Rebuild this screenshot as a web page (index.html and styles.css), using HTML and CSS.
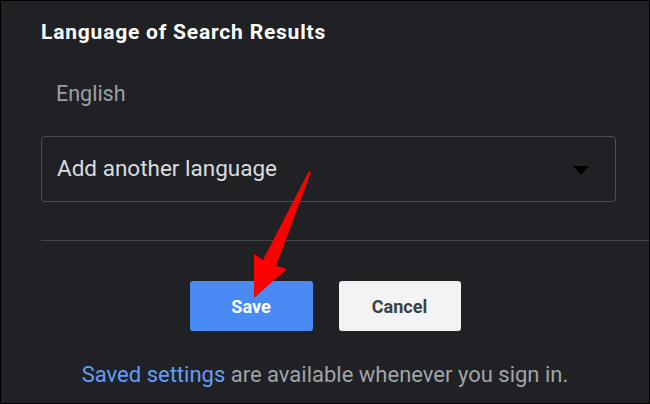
FILE: index.html
```html
<!DOCTYPE html>
<html lang="en">
<head>
<meta charset="utf-8">
<title>Language of Search Results</title>
<link rel="stylesheet" href="styles.css">
</head>
<body>
<div class="frame">
  <section class="settings">
    <h1 class="title">Language of Search Results</h1>
    <div class="current">English</div>
    <div class="select">
      <span class="select-label">Add another language</span>
      <span class="caret"></span>
    </div>
    <div class="divider"></div>
  </section>
  <div class="actions">
    <button class="btn btn-primary">Save</button>
    <button class="btn btn-secondary">Cancel</button>
  </div>
  <p class="footer"><a class="link" href="#">Saved settings</a> are available whenever you sign in.</p>
  <svg class="arrow" width="650" height="404" viewBox="0 0 650 404" aria-hidden="true">
    <polygon points="309,171 311,172 276,266 287,269 254,298 254,254 263,260" fill="#ff0000"/>
  </svg>
</div>
</body>
</html>
```
FILE: styles.css
```css
* { box-sizing: border-box; }
html, body { margin: 0; padding: 0; background: #202124; }
body { font-family: Roboto, "Noto Sans", "Liberation Sans", sans-serif; }

.frame {
  position: relative;
  width: 650px;
  height: 404px;
  border: 1px solid #000;
  background: #202124;
  overflow: hidden;
}

.settings { padding-left: 40px; }

.title {
  margin: 19px 0 0;
  font-size: 21px;
  line-height: 24px;
  font-weight: 700;
  letter-spacing: 0.8px;
  color: #ffffff;
}

.current {
  margin-top: 38px;
  padding-left: 15px;
  font-size: 21.5px;
  line-height: 24px;
  color: #9aa0a6;
}

.select {
  margin-top: 30px;
  width: 575px;
  height: 66px;
  border: 1px solid #4a4d51;
  border-radius: 4px;
  display: flex;
  align-items: center;
  justify-content: space-between;
  padding: 0 26px 2px 15px;
}

.select-label {
  font-size: 22.5px;
  line-height: 26px;
  color: #dadce0;
}

.caret {
  width: 0;
  height: 0;
  margin-top: 5px;
  border-left: 8px solid transparent;
  border-right: 8px solid transparent;
  border-top: 9px solid #000;
}

.divider {
  margin-top: 38px;
  height: 1px;
  background: #45474b;
}

.actions {
  margin-top: 40px;
  display: flex;
  justify-content: center;
  gap: 26px;
}

.btn {
  height: 50px;
  border: none;
  border-radius: 3px;
  font-family: inherit;
  font-size: 18px;
  font-weight: 700;
  padding: 0;
}

.btn-primary {
  width: 123px;
  background: #4a8af4;
  color: #ffffff;
}

.btn-secondary {
  width: 122px;
  background: #f1f3f4;
  color: #3c4043;
}

.footer {
  margin: 32px 0 0;
  text-align: center;
  font-size: 22px;
  line-height: 24px;
  color: #a0a4a8;
}

.link {
  color: #669df6;
  text-decoration: none;
}

.arrow {
  position: absolute;
  left: -1px;
  top: -1px;
  pointer-events: none;
}
```
